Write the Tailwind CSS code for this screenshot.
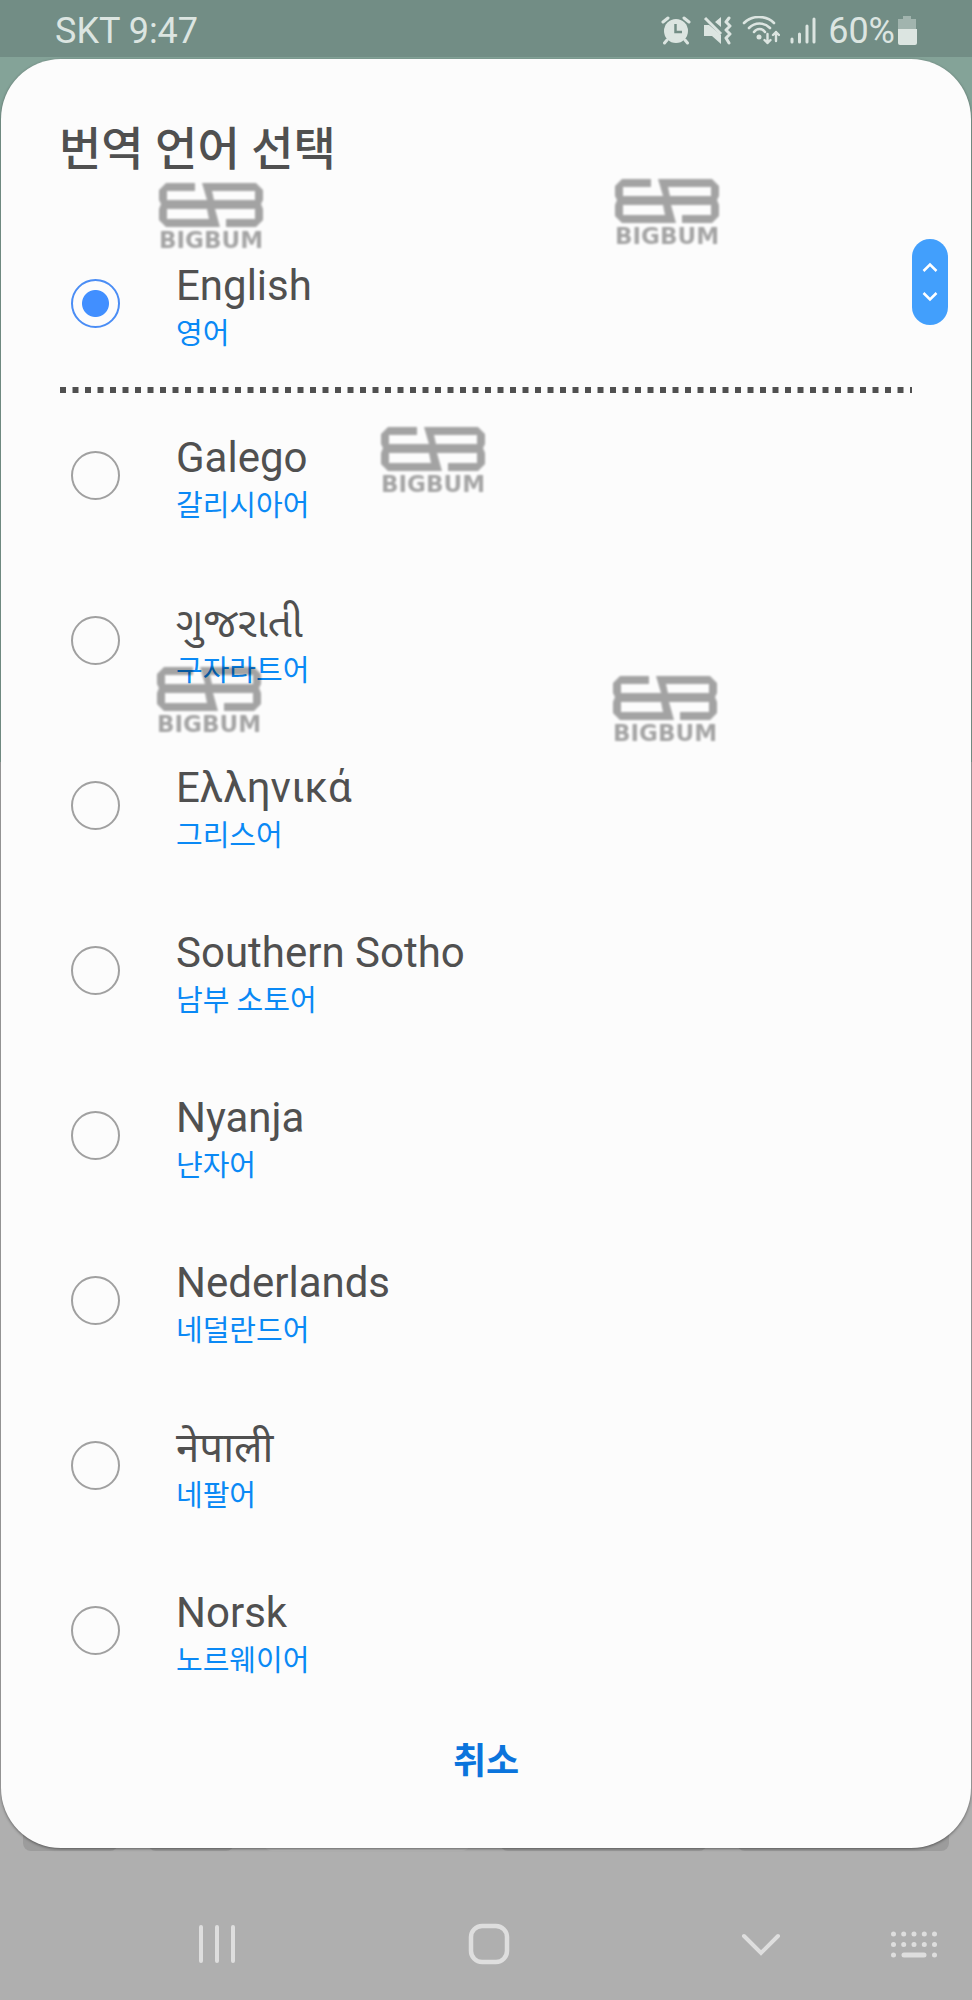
<!DOCTYPE html>
<html lang="ko">
<head>
<meta charset="utf-8">
<meta name="viewport" content="width=device-width, initial-scale=1">
<title>번역 언어 선택</title>
<script src="https://cdn.jsdelivr.net/npm/@tailwindcss/browser@4"></script>
</head>
<body class="flex min-h-screen flex-col bg-[#afafaf] bg-[linear-gradient(#84a398_762px,#afafaf_762px)] font-[Roboto,'Noto_Sans','Noto_Sans_CJK_KR',sans-serif] text-[#505050]">

<!-- Shared watermark artwork -->
<svg class="hidden" aria-hidden="true">
  <symbol id="mark" viewBox="0 0 106 46">
    <path fill="currentColor" fill-rule="evenodd" d="M8 1H37V9H9V18H49L44 1H98L105 8V18L103 22L105 27V38L98 45H68V37H97V27H57L62 45H8L1 38V27L3 22L1 18V8ZM54 9H97V18H56ZM9 27H49L51 37H9Z"/>
  </symbol>
</svg>

<header class="flex h-[57px] items-center justify-between bg-[#728d85] pt-1 pr-[55px] pl-[55px] text-[36px] leading-[42px] text-[#dce5e1]">
  <div>SKT 9:47</div>
  <div class="flex items-center">
    <svg class="mr-3 h-[30px] w-[30px]" viewBox="0 0 30 30" fill="none" stroke="currentColor" stroke-linecap="round" aria-label="알람">
      <circle cx="15" cy="15" r="12" fill="currentColor" stroke="none"/>
      <path stroke-width="3" d="M2 6L7 2M28 6L23 2M6 24L3.500 27M24 24L26.500 27"/>
      <path stroke="#728d85" stroke-width="2.500" stroke-linecap="butt" d="M14.500 8V16H21"/>
    </svg>
    <svg class="mr-2.5 h-[30px] w-[29px]" viewBox="0 0 29 30" fill="none" stroke="currentColor" aria-label="무음">
      <path fill="currentColor" stroke="none" d="M1 9H6L18 19V28L9 20H1ZM12 6L18 1V11Z"/>
      <path stroke-width="3" d="M2 2L18 18"/>
      <path stroke-width="3" stroke-linecap="round" stroke-linejoin="round" d="M26 2L23 6L27 10L23 14L27 18L23 22L26 27"/>
    </svg>
    <svg class="mr-2.5 h-[30px] w-[38px]" viewBox="0 0 38 30" fill="none" stroke="currentColor" stroke-width="2.600" stroke-linecap="round" aria-label="Wi-Fi">
      <path d="M2 7C10-1 24-1 32 7M7 12C13 6 22 6 28 12M12 16C15 12 20 12 23 16"/>
      <circle cx="17" cy="21" r="2.500" fill="currentColor" stroke="none"/>
      <path stroke-width="2.400" stroke-linejoin="round" d="M25.500 18V27M22.500 24L25.500 27L28.500 24M34 25V16M31 19L34 16L37 19"/>
    </svg>
    <svg class="mr-3 h-[30px] w-[26px]" viewBox="0 0 26 30" stroke="currentColor" stroke-width="3" stroke-linecap="round" aria-label="신호">
      <path d="M2 23V26M9.500 18V26M17 10V26M24 3V26"/>
    </svg>
    <span>60%</span>
    <svg class="ml-0.5 h-[30px] w-[20px]" viewBox="0 0 20 30" fill="currentColor" aria-label="배터리">
      <path opacity=".45" d="M6 0H14V3H19V13H1V3H6Z"/>
      <path d="M1 13H20V27Q20 29 18 29H3Q1 29 1 27Z"/>
    </svg>
  </div>
</header>

<div class="relative isolate mx-px mt-[2px]">
  <!-- Keyboard keys showing below the dialog -->
  <div class="absolute inset-x-[22px] -bottom-[3px] -z-10 flex h-10 gap-[30px]" aria-hidden="true">
    <div class="flex-[95] rounded-lg bg-[#9c9c9c]"></div>
    <div class="flex-[86] rounded-lg bg-[#9c9c9c]"></div>
    <div class="flex-[206] rounded-lg bg-[#b8b8b8]"></div>
    <div class="flex-[206] rounded-lg bg-[#9c9c9c]"></div>
    <div class="flex-[212] rounded-lg bg-[#9c9c9c]"></div>
  </div>

  <main role="dialog" aria-labelledby="title" class="relative overflow-hidden rounded-[60px] bg-[#fcfcfc] shadow-[0_1px_3px_rgba(0,0,0,0.45)]">
    <h1 id="title" class="h-[162px] pt-[60px] pl-[58px] text-[46px] leading-[60px] font-medium">번역 언어 선택</h1>

    <form>
      <label class="flex h-[165px] items-center gap-[56px] pl-[70px]">
        <input type="radio" name="lang" checked class="size-[49px] shrink-0 appearance-none rounded-full border-2 border-[#a0a0a0] checked:border-[#4a8df5] checked:bg-[radial-gradient(circle,#418fff_13px,transparent_14px)]">
        <span class="flex flex-col pt-3.5"><span class="text-[42px] leading-[46px]">English</span><span class="text-[29px] leading-[50px] text-[#0a89f5]">영어</span></span>
      </label>

      <svg class="mt-px ml-[59px] block h-[6px] w-[calc(100%-118px)]" aria-hidden="true"><line x1="0" y1="3" x2="100%" y2="3" stroke="#505050" stroke-width="6" stroke-dasharray="6 6.500"/></svg>

      <label class="flex h-[165px] items-center gap-[56px] pl-[70px]">
        <input type="radio" name="lang" class="size-[49px] shrink-0 appearance-none rounded-full border-2 border-[#a0a0a0] checked:border-[#4a8df5] checked:bg-[radial-gradient(circle,#418fff_13px,transparent_14px)]">
        <span class="flex flex-col pt-3.5"><span class="text-[42px] leading-[46px]">Galego</span><span class="text-[29px] leading-[50px] text-[#0a89f5]">갈리시아어</span></span>
      </label>
      <label class="flex h-[165px] items-center gap-[56px] pl-[70px]">
        <input type="radio" name="lang" class="size-[49px] shrink-0 appearance-none rounded-full border-2 border-[#a0a0a0] checked:border-[#4a8df5] checked:bg-[radial-gradient(circle,#418fff_13px,transparent_14px)]">
        <span class="flex flex-col pt-3.5"><span lang="gu" class="font-[Roboto,'Noto_Sans_Gujarati_UI','Noto_Sans_Gujarati',sans-serif] text-[42px] leading-[46px]">ગુજરાતી</span><span class="text-[29px] leading-[50px] text-[#0a89f5]">구자라트어</span></span>
      </label>
      <label class="flex h-[165px] items-center gap-[56px] pl-[70px]">
        <input type="radio" name="lang" class="size-[49px] shrink-0 appearance-none rounded-full border-2 border-[#a0a0a0] checked:border-[#4a8df5] checked:bg-[radial-gradient(circle,#418fff_13px,transparent_14px)]">
        <span class="flex flex-col pt-3.5"><span lang="el" class="text-[42px] leading-[46px]">Ελληνικά</span><span class="text-[29px] leading-[50px] text-[#0a89f5]">그리스어</span></span>
      </label>
      <label class="flex h-[165px] items-center gap-[56px] pl-[70px]">
        <input type="radio" name="lang" class="size-[49px] shrink-0 appearance-none rounded-full border-2 border-[#a0a0a0] checked:border-[#4a8df5] checked:bg-[radial-gradient(circle,#418fff_13px,transparent_14px)]">
        <span class="flex flex-col pt-3.5"><span class="text-[42px] leading-[46px]">Southern Sotho</span><span class="text-[29px] leading-[50px] text-[#0a89f5]">남부 소토어</span></span>
      </label>
      <label class="flex h-[165px] items-center gap-[56px] pl-[70px]">
        <input type="radio" name="lang" class="size-[49px] shrink-0 appearance-none rounded-full border-2 border-[#a0a0a0] checked:border-[#4a8df5] checked:bg-[radial-gradient(circle,#418fff_13px,transparent_14px)]">
        <span class="flex flex-col pt-3.5"><span class="text-[42px] leading-[46px]">Nyanja</span><span class="text-[29px] leading-[50px] text-[#0a89f5]">냔자어</span></span>
      </label>
      <label class="flex h-[165px] items-center gap-[56px] pl-[70px]">
        <input type="radio" name="lang" class="size-[49px] shrink-0 appearance-none rounded-full border-2 border-[#a0a0a0] checked:border-[#4a8df5] checked:bg-[radial-gradient(circle,#418fff_13px,transparent_14px)]">
        <span class="flex flex-col pt-3.5"><span class="text-[42px] leading-[46px]">Nederlands</span><span class="text-[29px] leading-[50px] text-[#0a89f5]">네덜란드어</span></span>
      </label>
      <label class="flex h-[165px] items-center gap-[56px] pl-[70px]">
        <input type="radio" name="lang" class="size-[49px] shrink-0 appearance-none rounded-full border-2 border-[#a0a0a0] checked:border-[#4a8df5] checked:bg-[radial-gradient(circle,#418fff_13px,transparent_14px)]">
        <span class="flex flex-col pt-3.5"><span lang="ne" class="text-[42px] leading-[46px]">नेपाली</span><span class="text-[29px] leading-[50px] text-[#0a89f5]">네팔어</span></span>
      </label>
      <label class="flex h-[165px] items-center gap-[56px] pl-[70px]">
        <input type="radio" name="lang" class="size-[49px] shrink-0 appearance-none rounded-full border-2 border-[#a0a0a0] checked:border-[#4a8df5] checked:bg-[radial-gradient(circle,#418fff_13px,transparent_14px)]">
        <span class="flex flex-col pt-3.5"><span class="text-[42px] leading-[46px]">Norsk</span><span class="text-[29px] leading-[50px] text-[#0a89f5]">노르웨이어</span></span>
      </label>
    </form>

    <div class="flex justify-center pb-[37px]">
      <button type="button" class="h-[98px] px-10 text-[36px] leading-[48px] font-bold text-[#0b74dc]">취소</button>
    </div>

    <button type="button" aria-label="빠른 스크롤" class="absolute top-[180px] right-[23px] flex h-[86px] w-9 items-center justify-center rounded-full bg-[#429ffc]">
      <svg class="h-10 w-4" viewBox="0 0 16 40" fill="none" stroke="#fff" stroke-width="2.500"><path d="M1.500 9L8 2.500L14.500 9M1.500 31L8 37.500L14.500 31"/></svg>
    </button>
  </main>

  <!-- Watermarks lying over the dialog -->
  <div class="pointer-events-none absolute inset-0 font-['DejaVu_Sans'] text-[23px] leading-[24px] font-bold text-black opacity-35 blur-[1px]">
    <div class="absolute top-[123px] left-[157px] w-[106px] text-center"><svg class="h-[46px] w-full"><use href="#mark"/></svg>BIGBUM</div>
    <div class="absolute top-[119px] left-[613px] w-[106px] text-center"><svg class="h-[46px] w-full"><use href="#mark"/></svg>BIGBUM</div>
    <div class="absolute top-[367px] left-[379px] w-[106px] text-center"><svg class="h-[46px] w-full"><use href="#mark"/></svg>BIGBUM</div>
    <div class="absolute top-[607px] left-[155px] w-[106px] text-center"><svg class="h-[46px] w-full"><use href="#mark"/></svg>BIGBUM</div>
    <div class="absolute top-[616px] left-[611px] w-[106px] text-center"><svg class="h-[46px] w-full"><use href="#mark"/></svg>BIGBUM</div>
  </div>
</div>

<nav class="grid min-h-[151px] flex-1 grid-cols-[1fr_1fr_1fr_34px] items-center pt-10 pr-[41px] pl-[81px] text-[#dedede]">
  <button type="button" aria-label="최근 앱" class="flex justify-center">
    <svg class="h-10 w-10 shrink-0" viewBox="0 0 40 40" stroke="currentColor" stroke-width="4" stroke-linecap="round"><path d="M4 3V37M20 3V37M36 3V37"/></svg>
  </button>
  <button type="button" aria-label="홈" class="flex justify-center">
    <svg class="h-[42px] w-[42px] shrink-0" viewBox="0 0 42 42" fill="none" stroke="currentColor" stroke-width="4.500"><rect x="3" y="3" width="36" height="36" rx="11"/></svg>
  </button>
  <button type="button" aria-label="키보드 닫기" class="flex justify-center">
    <svg class="h-10 w-10 shrink-0" viewBox="0 0 40 40" fill="none" stroke="currentColor" stroke-width="4" stroke-linecap="round"><path d="M3 12L20 29L37 12"/></svg>
  </button>
  <button type="button" aria-label="키보드 선택" class="flex justify-center">
    <svg class="h-[30px] w-12 shrink-0" viewBox="0 0 48 30" fill="none" stroke="currentColor" stroke-width="5" stroke-linecap="round"><path d="M3.500 5H3.510M13.700 5H13.710M24 5H24.010M34.300 5H34.310M44.500 5H44.510M3.500 15.500H3.510M13.700 15.500H13.710M24 15.500H24.010M34.300 15.500H34.310M44.500 15.500H44.510M3.500 26H3.510M14 26H34M44.500 26H44.510"/></svg>
  </button>
</nav>
</body>
</html>
